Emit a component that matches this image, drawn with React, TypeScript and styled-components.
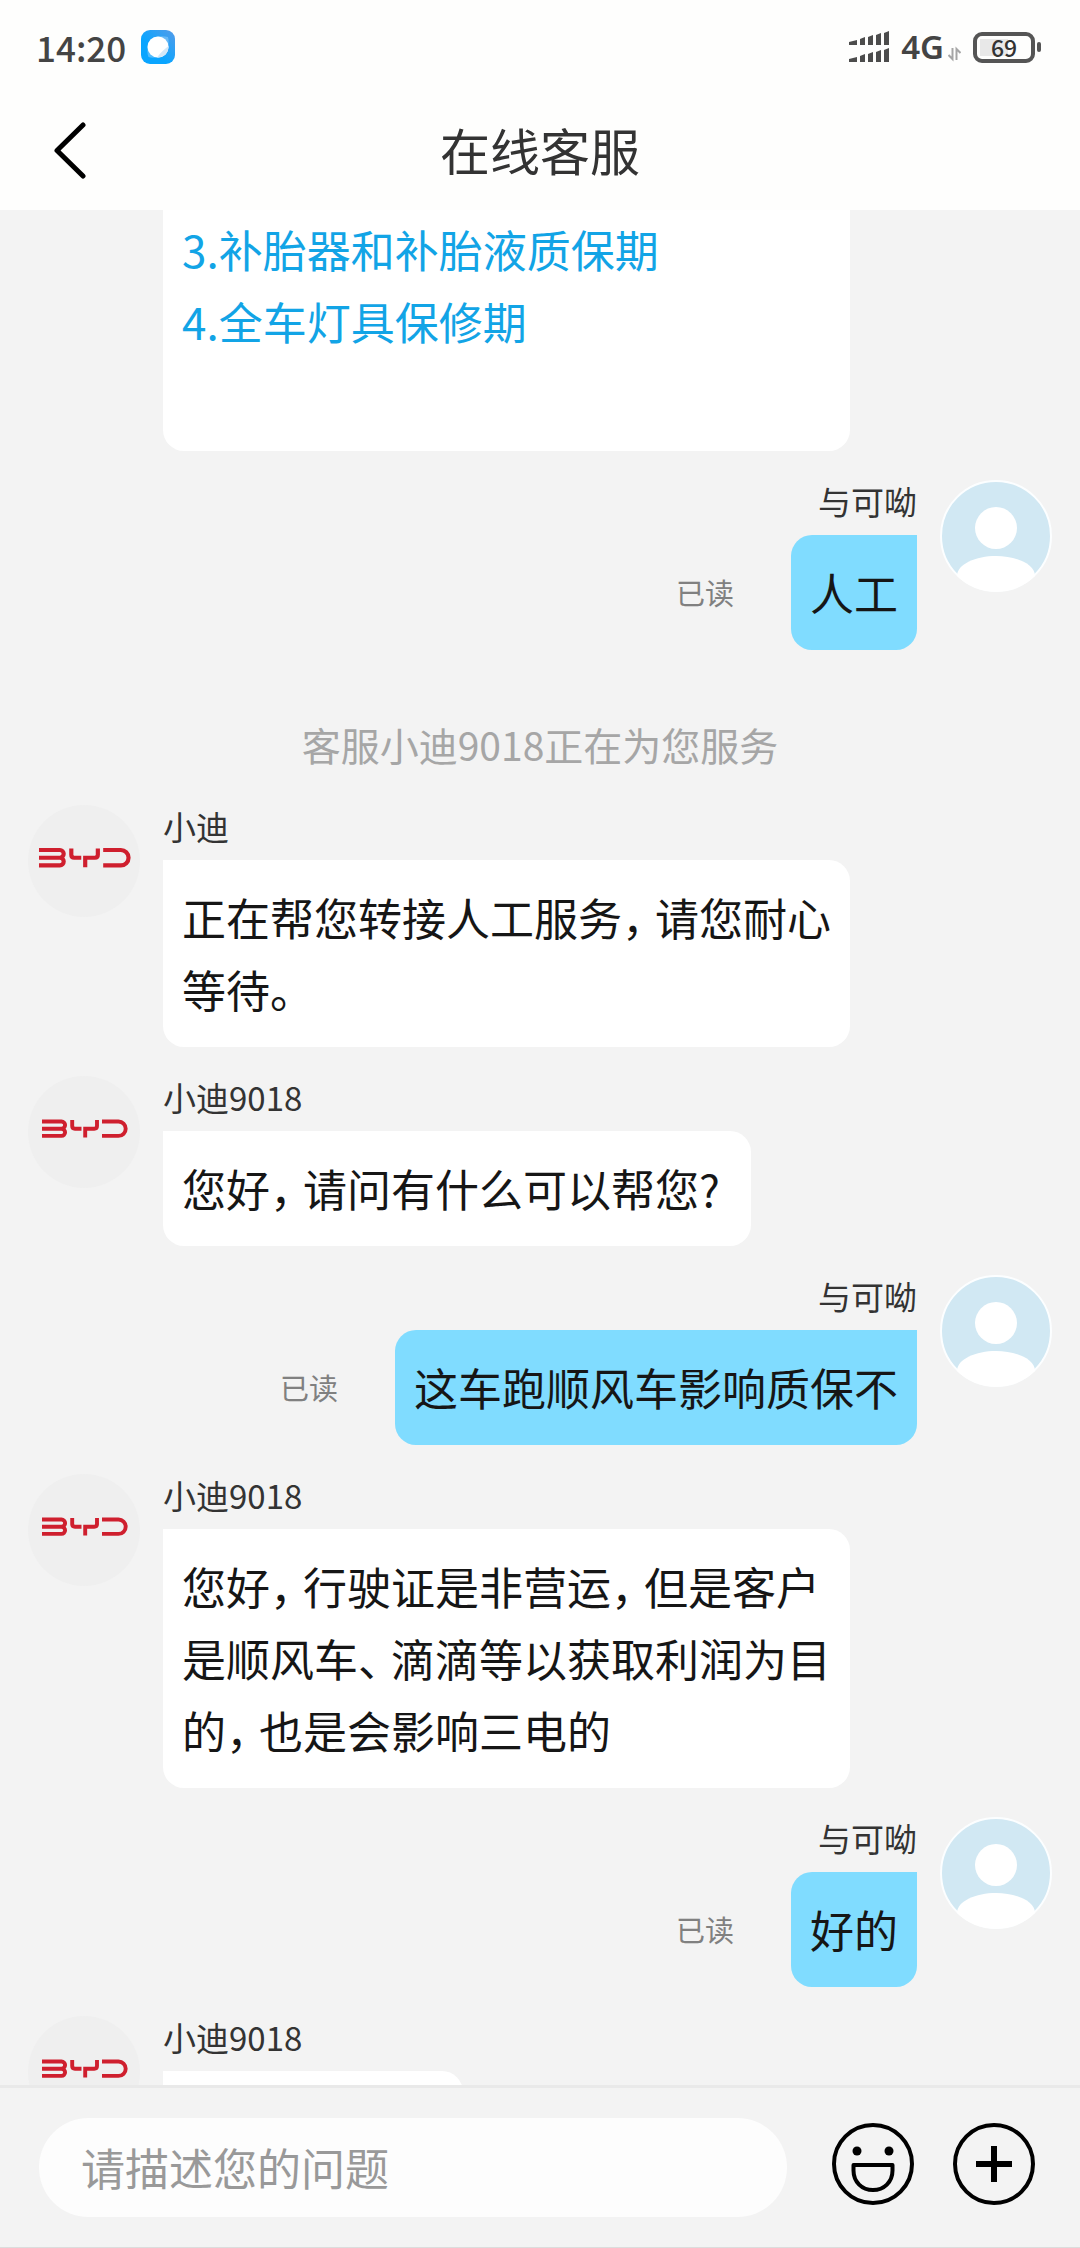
import React from 'react';
import styled, { createGlobalStyle } from 'styled-components';

const GlobalStyle = createGlobalStyle`
  *, *::before, *::after { box-sizing: border-box; }
  body {
    margin: 0;
    background: #f3f3f3;
    color: #161616;
    font-family: "Noto Sans CJK SC", "Noto Sans", sans-serif;
  }
  button { margin: 0; padding: 0; border: 0; background: none; color: inherit; cursor: pointer; }
  svg { display: block; flex: none; }
`;

const Screen = styled.div`
  display: flex;
  flex-direction: column;
  height: 100vh;
`;

const Header = styled.header`
  flex: none;
  background: #fefefd;
`;

const StatusBar = styled.div`
  display: flex;
  align-items: center;
  justify-content: space-between;
  height: 94px;
  padding: 0 39px 0 36px;
  color: #444;
  font-size: 33px;
  font-weight: 500;
  line-height: 44px;
`;

const StatusGroup = styled.div<{ $gap: number }>`
  display: flex;
  align-items: center;
  gap: ${(p) => p.$gap}px;
`;

const Clock = styled.time`
  font-size: 35px;
`;

const Network = styled.span`
  display: flex;
  align-items: center;
  gap: 4px;
  font-family: "Noto Sans", sans-serif;
  font-weight: 600;
`;

const BatteryBox = styled.span`
  display: flex;
  align-items: center;
  gap: 2px;
  &::after {
    content: "";
    width: 4px;
    height: 10px;
    border-radius: 2px;
    background: #555;
  }
`;

const BatteryCell = styled.span`
  display: flex;
  align-items: center;
  justify-content: center;
  width: 62px;
  height: 31px;
  border: 4px solid #555;
  border-radius: 9px;
  background: linear-gradient(#e8e8e8, #e8e8e8) 3px 3px / 28px 17px no-repeat;
  color: #333;
  font-size: 23px;
  line-height: 23px;
`;

const TitleRow = styled.div`
  display: grid;
  grid-template-columns: 1fr auto 1fr;
  align-items: center;
  height: 116px;
  padding: 0 50px;
`;

const BackButton = styled.button`
  justify-self: start;
`;

const Title = styled.h1`
  margin: 0;
  padding-bottom: 6px;
  color: #333;
  font-size: 50px;
  font-weight: 400;
  line-height: 72px;
`;

const Chat = styled.main`
  display: flex;
  flex: 1;
  flex-direction: column;
  gap: 29px;
  min-height: 0;
  padding: 0 28px;
  overflow-y: auto;
  scrollbar-width: none;
  > * { flex: none; }
`;

const Row = styled.article<{ $mine?: boolean }>`
  display: flex;
  flex-direction: ${(p) => (p.$mine ? 'row-reverse' : 'row')};
  align-items: flex-start;
  gap: 23px;
`;

const Column = styled.div<{ $mine?: boolean }>`
  display: flex;
  flex: 1;
  flex-direction: column;
  align-items: ${(p) => (p.$mine ? 'flex-end' : 'flex-start')};
  gap: 13px;
  min-width: 0;
`;

const Name = styled.span`
  color: #333;
  font-size: 33px;
  line-height: 42px;
`;

const BubbleLine = styled.div`
  display: flex;
  align-items: center;
  gap: 57px;
`;

const ReadMark = styled.span`
  padding-bottom: 2px;
  color: #808080;
  font-size: 29px;
  line-height: 44px;
`;

const Bubble = styled.p<{ $mine?: boolean }>`
  min-width: 126px;
  max-width: 687px;
  min-height: 115px;
  margin: 0;
  padding: 21px 19px 22px;
  border-radius: ${(p) => (p.$mine ? '21px 0 21px 21px' : '0 21px 21px 21px')};
  background: ${(p) => (p.$mine ? '#80dcff' : '#fff')};
  font-size: 44px;
  line-height: 72px;
`;

const PendingBubble = styled(Bubble)`
  width: 300px;
`;

const Mark = styled.span`
  display: inline-block;
  width: 33px;
  font-feature-settings: "halt" 1;
`;

const FaqCard = styled.section`
  width: 100%;
  max-width: 687px;
  margin-left: 135px;
  padding: 3px 19px 94px;
  border-radius: 0 0 21px 21px;
  background: #fff;
`;

const FaqLink = styled.a`
  display: block;
  color: #12a4e6;
  font-size: 44px;
  line-height: 72px;
  text-decoration: none;
`;

const Notice = styled.p`
  margin: 0;
  padding: 43px 0 10px;
  color: #a6a6a6;
  font-size: 39px;
  line-height: 44px;
  text-align: center;
`;

const Composer = styled.form`
  display: flex;
  flex: none;
  padding: 30px 45px 30px 39px;
  border-top: 3px solid #e9e9e9;
  border-bottom: 1px solid #dcdcdc;
  gap: 45px;
`;

const MessageInput = styled.input`
  flex: 1;
  min-width: 0;
  height: 99px;
  padding: 0 42px 2px;
  border: 0;
  border-radius: 50px;
  outline: none;
  background: #fdfdfd;
  color: #161616;
  font-family: inherit;
  font-size: 44px;
  &::placeholder { color: #999; opacity: 1; }
`;

const Actions = styled.div`
  display: flex;
  align-items: flex-start;
  gap: 39px;
  padding-top: 5px;
`;

const AppBadge = () => (
  <svg width="34" height="34" viewBox="0 0 34 34" aria-hidden="true">
    <defs>
      <linearGradient id="badge" x1="0" y1="1" x2="1" y2="0">
        <stop offset="0.4" stopColor="#0aa5ff" />
        <stop offset="1" stopColor="#559be8" />
      </linearGradient>
    </defs>
    <rect width="34" height="34" rx="9" fill="url(#badge)" />
    <path d="M17 6.500C20 6 24 6 27 7C28 10 27.500 13 27.500 17A10.500 10.500 0 0 1 17 27.500C13 27.500 10 28 7.500 27C6 24 6.500 20 6.500 17A10.500 10.500 0 0 1 17 6.500Z" fill="#9cd4fb" opacity="0.5" />
    <circle cx="17" cy="17" r="10.500" fill="#fff" />
    <path d="M27.500 16C24 19 20 22 16 27.400A10.500 10.500 0 0 0 27.500 16Z" fill="#d3e8f8" />
  </svg>
);

const SIGNAL_BARS = [
  { x: 0, w: 8, h: 4 },
  { x: 11, w: 5, h: 7 },
  { x: 19, w: 5, h: 9 },
  { x: 27, w: 5, h: 11 },
  { x: 35, w: 5, h: 13 },
];

const Signal = () => (
  <svg width="40" height="32" viewBox="0 0 40 32" fill="#4c4c4c" aria-hidden="true">
    {[14, 31].map((base) =>
      SIGNAL_BARS.map((b) => (
        <path key={`${base}-${b.x}`} d={`M${b.x} ${base - b.h + 1}L${b.x + b.w} ${base - b.h - 1}V${base}H${b.x}Z`} />
      )),
    )}
  </svg>
);

const DataArrows = () => (
  <svg width="13" height="36" viewBox="0 0 13 36" fill="none" stroke="#a5a5a5" strokeWidth="2" aria-hidden="true">
    <path d="M4.500 19V30L0.500 26M8.500 31V20L12.500 24" />
  </svg>
);

const BackIcon = () => (
  <svg width="40" height="60" viewBox="0 0 40 60" fill="none" stroke="#000" strokeWidth="5" strokeLinecap="round" strokeLinejoin="round" aria-hidden="true">
    <path d="M33 3L7 28.500L33 54" />
  </svg>
);

const UserAvatar = () => (
  <svg width="112" height="112" viewBox="0 0 112 112" role="img" aria-label="与可呦">
    <circle cx="56" cy="56" r="55" fill="#d1e8f3" stroke="#fcfeff" strokeWidth="2" />
    <circle cx="56" cy="48" r="21" fill="#fff" />
    <path d="M17 96C17 84 36 76 56 76S95 84 95 96A56 56 0 0 1 17 96Z" fill="#fff" />
  </svg>
);

const BrandAvatar = ({ large }: { large?: boolean }) => (
  <svg width="112" height="112" viewBox="0 0 112 112" role="img" aria-label="BYD">
    <circle cx="56" cy="56" r="56" fill="#efefef" />
    <g
      fill="none"
      stroke="#cf1f2e"
      strokeWidth="3.900"
      transform={large ? 'translate(57 52.500) scale(1.070) translate(-57 -52.500)' : undefined}
    >
      <path d="M14 45.500H33.500a3.600 3.600 0 0 1 0 7.200H14M33.500 52.700a3.600 3.600 0 0 1 0 7.200H14" />
      <path d="M44.200 44V50q0 2.700 2.700 2.700H53.500M69 44V50q0 2.700 -2.700 2.700H57.200V61.500" />
      <path d="M74 45.500H90.500a7.200 7.200 0 0 1 0 14.400H74" />
    </g>
  </svg>
);

const SmileIcon = () => (
  <svg width="82" height="82" viewBox="0 0 82 82" fill="none" stroke="#000" strokeWidth="4" aria-hidden="true">
    <circle cx="41" cy="41" r="39" />
    <circle cx="25" cy="28" r="4.500" fill="#000" stroke="none" />
    <circle cx="57" cy="28" r="4.500" fill="#000" stroke="none" />
    <path d="M21.500 42H60.500V47.500C60.500 59 52 67 41 67S21.500 59 21.500 47.500Z" strokeLinejoin="round" />
  </svg>
);

const PlusIcon = () => (
  <svg width="82" height="82" viewBox="0 0 82 82" fill="none" stroke="#000" aria-hidden="true">
    <circle cx="41" cy="41" r="39" strokeWidth="4" />
    <path d="M23 41H59M41 23V59" strokeWidth="6" />
  </svg>
);

/* Punctuation takes three quarters of a character cell; a newline breaks the line. */
const MessageText = ({ text }: { text: string }) => (
  <>
    {text.split(/([，、。?\n])/).map((part, i) => {
      if (part === '\n') return <br key={i} />;
      return i % 2 ? <Mark key={i}>{part}</Mark> : part;
    })}
  </>
);

const AgentMessage = ({ name, text, large }: { name: string; text?: string; large?: boolean }) => (
  <Row>
    <BrandAvatar large={large} />
    <Column>
      <Name>{name}</Name>
      {text ? (
        <Bubble>
          <MessageText text={text} />
        </Bubble>
      ) : (
        <PendingBubble />
      )}
    </Column>
  </Row>
);

const MyMessage = ({ text }: { text: string }) => (
  <Row $mine>
    <UserAvatar />
    <Column $mine>
      <Name>与可呦</Name>
      <BubbleLine>
        <ReadMark>已读</ReadMark>
        <Bubble $mine>{text}</Bubble>
      </BubbleLine>
    </Column>
  </Row>
);

export default function App() {
  return (
    <Screen>
      <GlobalStyle />
      <Header>
        <StatusBar>
          <StatusGroup $gap={15}>
            <Clock>14:20</Clock>
            <AppBadge />
          </StatusGroup>
          <StatusGroup $gap={12}>
            <Signal />
            <Network>
              4G
              <DataArrows />
            </Network>
            <BatteryBox>
              <BatteryCell>69</BatteryCell>
            </BatteryBox>
          </StatusGroup>
        </StatusBar>
        <TitleRow>
          <BackButton type="button" aria-label="返回">
            <BackIcon />
          </BackButton>
          <Title>在线客服</Title>
        </TitleRow>
      </Header>

      <Chat>
        <FaqCard>
          <FaqLink href="#tyre">3.补胎器和补胎液质保期</FaqLink>
          <FaqLink href="#lamps">4.全车灯具保修期</FaqLink>
        </FaqCard>
        <MyMessage text="人工" />
        <Notice>客服小迪9018正在为您服务</Notice>
        <AgentMessage name="小迪" text={'正在帮您转接人工服务，请您耐心\n等待。'} large />
        <AgentMessage name="小迪9018" text="您好，请问有什么可以帮您?" />
        <MyMessage text="这车跑顺风车影响质保不" />
        <AgentMessage
          name="小迪9018"
          text={'您好，行驶证是非营运，但是客户\n是顺风车、滴滴等以获取利润为目\n的，也是会影响三电的'}
        />
        <MyMessage text="好的" />
        <AgentMessage name="小迪9018" />
      </Chat>

      <Composer onSubmit={(e) => e.preventDefault()}>
        <MessageInput type="text" aria-label="请描述您的问题" placeholder="请描述您的问题" />
        <Actions>
          <button type="button" aria-label="表情">
            <SmileIcon />
          </button>
          <button type="button" aria-label="更多">
            <PlusIcon />
          </button>
        </Actions>
      </Composer>
    </Screen>
  );
}
